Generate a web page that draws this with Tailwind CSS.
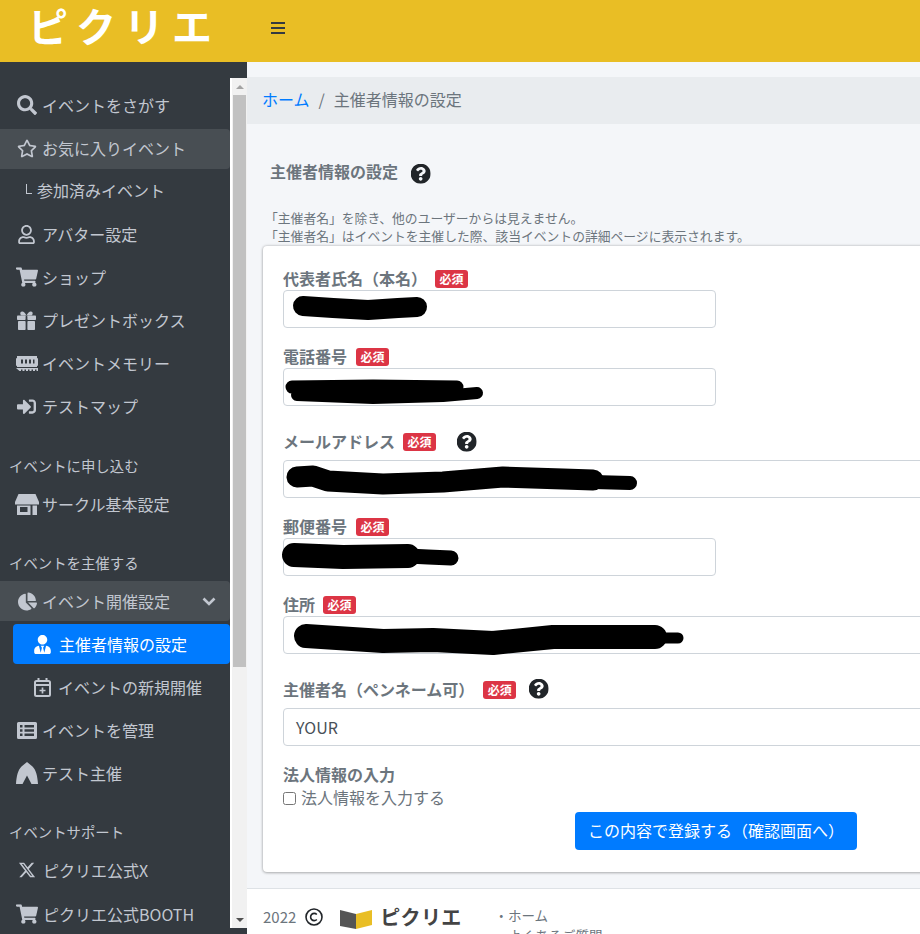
<!DOCTYPE html>
<html lang="ja">
<head>
    <meta charset="UTF-8">
    <meta name="viewport" content="width=device-width, initial-scale=1.0">
    <title>ピクリエ - 主催者情報の設定</title>
    <script src="https://cdn.jsdelivr.net/npm/@tailwindcss/browser@4"></script>
</head>
<body class="w-[920px] h-[934px] overflow-hidden bg-[#343a40] font-['Noto_Sans_CJK_JP','Noto_Sans',sans-serif] text-[16px]">
    <svg class="hidden">
        <symbol id="i-help" viewBox="8 8 496 496"><path d="M504 256c0 136.997-111.043 248-248 248S8 392.997 8 256C8 119.083 119.043 8 256 8s248 111.083 248 248zM262.655 90c-54.497 0-89.255 22.957-116.549 63.758-3.536 5.286-2.353 12.415 2.715 16.258l34.699 26.31c5.205 3.947 12.621 3.008 16.665-2.122 17.864-22.658 30.113-35.797 57.303-35.797 20.429 0 45.698 13.148 45.698 32.958 0 14.976-12.363 22.667-32.534 33.976C247.128 238.528 216 254.941 216 296v4c0 6.627 5.373 12 12 12h56c6.627 0 12-5.373 12-12v-1.333c0-28.462 83.186-29.647 83.186-106.667 0-58.002-60.165-102-116.531-102zM256 338c-25.365 0-46 20.635-46 46 0 25.364 20.635 46 46 46s46-20.636 46-46c0-25.365-20.635-46-46-46z"/></symbol>
        <symbol id="i-cart" viewBox="0 0 576 512"><path d="M528.12 301.319l47.273-208C578.806 78.301 567.391 64 551.99 64H159.208l-9.166-44.81C147.758 8.021 137.93 0 126.529 0H24C10.745 0 0 10.745 0 24v16c0 13.255 10.745 24 24 24h69.883l70.248 343.435C147.325 417.1 136 435.222 136 456c0 30.928 25.072 56 56 56s56-25.072 56-56c0-15.674-6.447-29.835-16.824-40h209.647C430.447 426.165 424 440.326 424 456c0 30.928 25.072 56 56 56s56-25.072 56-56c0-22.172-12.888-41.332-31.579-50.405l5.517-24.276c3.413-15.018-8.002-29.319-23.403-29.319H218.117l-6.545-32h293.145c11.206 0 20.92-7.754 23.403-18.681z"/></symbol>
    </svg>

    <header class="h-[62px] bg-[#e9be25] flex items-center">
        <div class="w-[230px] pl-[28px] text-white font-bold text-[40px] leading-[44px] tracking-[8px] -mt-[12px] whitespace-nowrap overflow-visible">ピクリエ</div>
        <svg class="w-[14px] h-[14px] ml-[41px] -mt-[6px]" viewBox="0 0 14 14" fill="#343a40"><rect y="1" width="14" height="2"/><rect y="6" width="14" height="2"/><rect y="11" width="14" height="2"/></svg>
    </header>

    <div class="flex h-[872px]">
        <!-- sidebar -->
        <aside class="w-[230px] shrink-0 pt-[23px] text-[#c2c7d0] overflow-hidden">
            <a class="flex items-center h-10 mb-[4px] pl-[17px]"><span class="w-[25px] flex"><svg class="w-[20px] h-[20px]" viewBox="0 0 512 512" fill="currentColor"><path d="M505 442.7L405.3 343c-4.5-4.5-10.6-7-17-7H372c27.6-35.3 44-79.7 44-128C416 93.1 322.9 0 208 0S0 93.1 0 208s93.1 208 208 208c48.3 0 92.7-16.4 128-44v16.3c0 6.4 2.5 12.5 7 17l99.7 99.7c9.4 9.4 24.6 9.4 33.9 0l28.3-28.3c9.4-9.4 9.4-24.6.1-34zM208 336c-70.7 0-128-57.2-128-128 0-70.7 57.2-128 128-128 70.7 0 128 57.2 128 128 0 70.7-57.2 128-128 128z"/></svg></span>イベントをさがす</a>
            <a class="flex items-center h-10 mb-[2px] pl-[17px] pb-[2px] bg-white/10 rounded-r"><span class="w-[25px] flex"><svg class="w-[20px] h-[19px]" viewBox="0 0 576 512" fill="currentColor"><path d="M528.1 171.5L382 150.2 316.7 17.8c-11.7-23.6-45.6-23.9-57.4 0L194 150.2 47.9 171.5c-26.2 3.8-36.7 36.1-17.7 54.6l105.7 103-25 145.5c-4.5 26.3 23.2 46 46.4 33.7L288 439.6l130.7 68.7c23.2 12.2 50.9-7.4 46.4-33.7l-25-145.5 105.7-103c19-18.5 8.5-50.8-17.7-54.6zM388.6 312.3l23.7 138.4L288 385.4l-124.3 65.3 23.7-138.4-100.6-98 139-20.2 62.2-126 62.2 126 139 20.2-100.6 98z"/></svg></span>お気に入りイベント</a>
            <a class="flex items-center h-10 mb-[3px] pl-[26px] pb-[2px]"><span class="w-[11px] flex"><span class="w-[6px] h-[10px] -mt-[2px] border-l-[1.5px] border-b-[1.5px] border-[#c2c7d0]"></span></span>参加済みイベント</a>
            <a class="flex items-center h-10 mb-[3px] pl-[18px]"><span class="w-[24px] flex"><svg class="w-[17px] h-[19px]" viewBox="0 0 448 512" fill="currentColor"><path d="M313.6 304c-28.7 0-42.5 16-89.6 16-47.1 0-60.8-16-89.6-16C60.2 304 0 364.2 0 438.4V464c0 26.5 21.5 48 48 48h352c26.5 0 48-21.5 48-48v-25.6c0-74.2-60.2-134.4-134.4-134.4zM400 464H48v-25.6c0-47.6 38.8-86.4 86.4-86.4 14.6 0 38.3 16 89.6 16 51.7 0 74.9-16 89.6-16 47.6 0 86.4 38.8 86.4 86.4V464zM224 288c79.5 0 144-64.5 144-144S303.5 0 224 0 80 64.5 80 144s64.5 144 144 144zm0-240c52.9 0 96 43.1 96 96s-43.1 96-96 96-96-43.1-96-96 43.1-96 96-96z"/></svg></span>アバター設定</a>
            <a class="flex items-center h-10 mb-[3px] pl-[16px]"><span class="w-[26px] flex"><svg class="w-[22px] h-[20px]" viewBox="0 0 576 512" fill="currentColor"><use href="#i-cart"/></svg></span>ショップ</a>
            <a class="flex items-center h-10 mb-[3px] pl-[17px]"><span class="w-[25px] flex"><svg class="w-[19px] h-[19px]" viewBox="0 0 19 19" fill="currentColor"><rect y="4.5" width="8.6" height="4.5" rx=".8"/><rect x="10.4" y="4.5" width="8.6" height="4.5" rx=".8"/><rect x="1" y="10" width="7.6" height="9" rx=".8"/><rect x="10.4" y="10" width="7.6" height="9" rx=".8"/><path d="M9.5 4.500C8 1.500 6.500.3 5 .5 3 .8 2.700 3.400 4.500 4.500h5zm0 0c1.500-3 3-4.200 4.500-4 2 .3 2.300 2.900.5 4h-5z"/></svg></span>プレゼントボックス</a>
            <a class="flex items-center h-10 mb-[3px] pl-[16px]"><span class="w-[26px] flex"><svg class="w-[22px] h-[15px]" viewBox="0 0 22 15" fill="currentColor"><path d="M1 0h20v2l1 .5v7l-1 .5v1h-20v-1l-1-.5v-7l1-.5zM0 12h22v3h-1.500v-1.500h-1.500v1.500h-2v-1.500h-1.500v1.500h-2v-1.500h-1.500v1.500h-2v-1.500h-1.500v1.500h-2v-1.500h-1.500v1.500h-1.500z"/><path fill="#343a40" d="M5 3.500h2v4h-2zM9 3.500h2v4h-2zM13 3.500h2v4h-2zM17 3.500h1.500v4h-1.500z"/></svg></span>イベントメモリー</a>
            <a class="flex items-center h-10 mb-[3px] pl-[17px]"><span class="w-[25px] flex"><svg class="w-[19px] h-[19px]" viewBox="0 0 512 512" fill="currentColor"><path d="M416 448h-84c-6.600 0-12-5.400-12-12v-40c0-6.600 5.400-12 12-12h84c17.700 0 32-14.300 32-32V160c0-17.700-14.300-32-32-32h-84c-6.600 0-12-5.400-12-12V76c0-6.600 5.400-12 12-12h84c53 0 96 43 96 96v192c0 53-43 96-96 96zm-47-201L201 79c-15-15-41-4.500-41 17v96H24c-13.300 0-24 10.700-24 24v96c0 13.300 10.700 24 24 24h136v96c0 21.500 26 32 41 17l168-168c9.300-9.400 9.300-24.600 0-34z"/></svg></span>テストマップ</a>

            <p class="h-[55px] flex items-end pb-[8px] pl-[9px] text-[14.400px] leading-[20px]">イベントに申し込む</p>
            <a class="flex items-center h-10 mb-[3px] pl-[15px]"><span class="w-[27px] flex"><svg class="w-[24px] h-[21px]" viewBox="0 0 24 21" fill="currentColor"><path d="M3.500 0h17l3.500 8v2.500h-24V8z"/><path fill-rule="evenodd" d="M2 11.500h13.500V21H2zM5 13v5h7.500v-5z"/><path d="M17.500 11.500h4.500V21h-4.500z"/></svg></span>サークル基本設定</a>

            <p class="h-[54px] flex items-end pb-[8px] pl-[9px] text-[14.400px] leading-[20px]">イベントを主催する</p>
            <a class="flex items-center h-10 mb-[3px] pl-[18px] bg-white/10 rounded-r"><span class="w-[24px] flex"><svg class="w-[19px] h-[19px]" viewBox="0 0 544 512" fill="currentColor"><path d="M527.790 288H290.500l158.030 158.030c6.040 6.040 15.980 6.530 22.190.68 38.700-36.460 65.320-85.610 73.130-140.860 1.340-9.460-6.510-17.850-16.060-17.850zm-15.830-64.800C503.720 103.740 408.260 8.280 288.800.04 279.680-.59 272 7.100 272 16.240V240h223.770c9.140 0 16.820-7.680 16.190-16.800zM224 288V50.710c0-9.550-8.390-17.400-17.840-16.060C86.990 51.490-4.100 155.600.14 280.370 4.500 408.510 114.830 513.590 243.030 511.980c50.400-.63 96.970-16.870 135.260-44.030 7.900-5.600 8.420-17.230 1.570-24.080L224 288z"/></svg></span>イベント開催設定<svg class="w-[14px] h-[9px] ml-[32px]" viewBox="0 0 14 9" fill="none" stroke="currentColor" stroke-width="2.600"><path d="M1.500 1.500 7 7l5.500-5.500"/></svg></a>
            <a class="flex items-center h-10 mb-[3px] ml-[13px] pl-[21px] bg-[#007bff] text-white rounded"><span class="w-[25px] flex"><svg class="w-[17px] h-[19px]" viewBox="0 0 448 512" fill="currentColor"><path d="M224 256c70.700 0 128-57.300 128-128S294.700 0 224 0 96 57.300 96 128s57.300 128 128 128zm95.800 32.600L272 480l-32-136 32-56h-96l32 56-32 136-47.800-191.400C56.900 292 0 350.300 0 422.400V464c0 26.500 21.500 48 48 48h352c26.500 0 48-21.500 48-48v-41.600c0-72.100-56.900-130.400-128.200-133.800z"/></svg></span>主催者情報の設定</a>
            <a class="flex items-center h-10 mb-[3px] pl-[34px]"><span class="w-[24px] flex"><svg class="w-[17px] h-[19px]" viewBox="0 0 17 19" fill="none" stroke="currentColor" stroke-width="2"><rect x="1" y="3" width="15" height="15" rx="1.500"/><path d="M1 7h15M4.500 0v4M12.500 0v4"/><path d="M8.500 9.500v6M5.500 12.500h6" stroke-width="1.700"/></svg></span>イベントの新規開催</a>
            <a class="flex items-center h-10 mb-[3px] pl-[17px]"><span class="w-[25px] flex"><svg class="w-[20px] h-[17px]" viewBox="0 0 20 17" fill="currentColor"><path fill-rule="evenodd" d="M1.500 0h17A1.500 1.500 0 0 1 20 1.500v14a1.500 1.500 0 0 1-1.500 1.500h-17A1.500 1.500 0 0 1 0 15.500v-14A1.500 1.500 0 0 1 1.500 0zM3 3v2.500h2.500V3zm4.500 0v2.500h9.500V3zM3 7.300v2.500h2.500V7.300zm4.500 0v2.500h9.500V7.300zM3 11.600v2.500h2.500v-2.500zm4.500 0v2.500h9.500v-2.500z"/></svg></span>イベントを管理</a>
            <a class="flex items-center h-10 mb-[3px] pl-[16px]"><span class="w-[26px] flex"><svg class="w-[22px] h-[22px]" viewBox="0 0 22 22" fill="currentColor"><path d="M11 0l5.500 4.500C20 8 21.500 14 22 22h-6.500L11 13.500 6.500 22H0C.5 14 2 8 5.500 4.500z"/></svg></span>テスト主催</a>

            <p class="h-[54px] flex items-end pb-[8px] pl-[9px] text-[14.400px] leading-[20px]">イベントサポート</p>
            <a class="flex items-center h-10 mb-[4px] pl-[18px]"><span class="w-[25px] flex"><svg class="w-[18px] h-[18px]" viewBox="0 0 512 512" fill="currentColor"><path d="M389.200 48h70.600L305.600 224.200 487 464H345L233.700 318.600 106.500 464H35.800L200.700 275.500 26.800 48H172.400L272.900 180.900 389.200 48zM364.400 421.800h39.100L151.100 88h-42L364.400 421.800z"/></svg></span>ピクリエ公式X</a>
            <a class="flex items-center h-10 mb-[3px] pl-[16px]"><span class="w-[27px] flex"><svg class="w-[22px] h-[20px]" viewBox="0 0 576 512" fill="currentColor"><use href="#i-cart"/></svg></span>ピクリエ公式BOOTH</a>
        </aside>

        <!-- sidebar scrollbar -->
        <div class="w-[17px] shrink-0 pt-[16px] pb-[6px]">
            <div class="h-full bg-[#f1f1f1] border-l-2 border-white flex flex-col items-center">
                <div class="h-[17px] flex items-center"><div class="w-0 h-0 border-x-[4px] border-x-transparent border-b-[4px] border-b-[#a3a3a3]"></div></div>
                <div class="w-[13px] h-[572px] bg-[#c1c1c1]"></div>
                <div class="flex-1"></div>
                <div class="h-[17px] flex items-center"><div class="w-0 h-0 border-x-[4px] border-x-transparent border-t-[4px] border-t-[#505050]"></div></div>
            </div>
        </div>

        <!-- main -->
        <main class="flex-1 min-w-0 bg-[#f4f6f9] pt-[15px] text-[#6c757d] overflow-hidden">
            <nav class="h-[47px] bg-[#e9ecef] flex items-center pl-[15px] pb-[4px] whitespace-nowrap">
                <a class="text-[#007bff]">ホーム</a><span class="mx-[9px]">/</span><span>主催者情報の設定</span>
            </nav>

            <div class="mt-[38px] ml-[23px] h-[22px] flex items-center">
                <h1 class="font-bold -mt-[4px]">主催者情報の設定</h1>
                <svg class="w-[20px] h-[20px] ml-[13px] mt-[1px] text-[#212529]" viewBox="8 8 496 496" fill="currentColor"><use href="#i-help"/></svg>
            </div>
            <p class="mt-[25px] ml-[18px] mb-px text-[12.800px] leading-[18px] whitespace-nowrap">「主催者名」を除き、他のユーザーからは見えません。<br>「主催者名」はイベントを主催した際、該当イベントの詳細ページに表示されます。</p>

            <form class="ml-[16px] w-[800px] bg-white rounded-[4px] shadow-[0_0_3px_rgba(0,0,0,.25),0_1px_3px_rgba(0,0,0,.2)] pt-[22px] pl-[20px] pb-[22px]">
                <div class="h-[22px] pb-[3px] flex items-center font-bold">代表者氏名（本名）<span class="ml-[8px] mt-[3px] w-[33px] h-[18px] bg-[#dc3545] rounded-[3px] text-white text-[12px] leading-[18px] text-center">必須</span></div>
                <div class="relative w-[433px] h-[38px] border border-[#ced4da] rounded-[4px] bg-white">
                    <svg class="absolute -left-px -top-px overflow-visible" width="433" height="38" fill="none" stroke="#000" stroke-linecap="round" stroke-linejoin="round"><path d="M20 16 50 18 85 20 115 18 134 17" stroke-width="20"/></svg>
                </div>

                <div class="mt-[18px] h-[22px] pb-[2px] flex items-center font-bold">電話番号<span class="ml-[9px] mt-[2px] w-[33px] h-[18px] bg-[#dc3545] rounded-[3px] text-white text-[12px] leading-[18px] text-center">必須</span></div>
                <div class="relative w-[433px] h-[38px] border border-[#ced4da] rounded-[4px] bg-white">
                    <svg class="absolute -left-px -top-px overflow-visible" width="433" height="38" fill="none" stroke="#000" stroke-linecap="round" stroke-linejoin="round"><path d="M9 19 90 18 174 19" stroke-width="13"/><path d="M14 27 90 30 160 28 194 25" stroke-width="12"/></svg>
                </div>

                <div class="mt-[18px] h-[36px] pb-[3px] flex items-center font-bold">メールアドレス<span class="ml-[8px] mt-[3px] w-[33px] h-[18px] bg-[#dc3545] rounded-[3px] text-white text-[12px] leading-[18px] text-center">必須</span><svg class="w-[20px] h-[20px] ml-[21px] mt-[2px] text-[#212529]" viewBox="8 8 496 496" fill="currentColor"><use href="#i-help"/></svg></div>
                <div class="relative w-[760px] h-[38px] border border-[#ced4da] rounded-[4px] bg-white">
                    <svg class="absolute -left-px -top-px overflow-visible" width="433" height="38" fill="none" stroke="#000" stroke-linecap="round" stroke-linejoin="round"><path d="M14 17 30 16 45 21 100 24 160 22 220 17 280 19 310 20" stroke-width="21"/><path d="M310 22 347 23" stroke-width="14"/></svg>
                </div>

                <div class="mt-[18px] h-[22px] pb-[2px] flex items-center font-bold">郵便番号<span class="ml-[9px] mt-[2px] w-[33px] h-[18px] bg-[#dc3545] rounded-[3px] text-white text-[12px] leading-[18px] text-center">必須</span></div>
                <div class="relative w-[433px] h-[38px] border border-[#ced4da] rounded-[4px] bg-white">
                    <svg class="absolute -left-px -top-px overflow-visible" width="433" height="38" fill="none" stroke="#000" stroke-linecap="round" stroke-linejoin="round"><path d="M11 17 60 19 125 18" stroke-width="24"/><path d="M125 18 145 19 168 20" stroke-width="15"/></svg>
                </div>

                <div class="mt-[18px] h-[22px] pb-[2px] flex items-center font-bold">住所<span class="ml-[8px] mt-[2px] w-[33px] h-[18px] bg-[#dc3545] rounded-[3px] text-white text-[12px] leading-[18px] text-center">必須</span></div>
                <div class="relative w-[760px] h-[38px] border border-[#ced4da] rounded-[4px] bg-white">
                    <svg class="absolute -left-px -top-px overflow-visible" width="433" height="38" fill="none" stroke="#000" stroke-linecap="round" stroke-linejoin="round"><path d="M23 20 100 25 150 24 210 27 270 21 345 21 372 21" stroke-width="24"/><path d="M372 22 395 22" stroke-width="11"/></svg>
                </div>

                <div class="mt-[18px] h-[36px] pb-[2px] flex items-center font-bold">主催者名（ペンネーム可）<span class="ml-[9px] mt-[2px] w-[33px] h-[18px] bg-[#dc3545] rounded-[3px] text-white text-[12px] leading-[18px] text-center">必須</span><svg class="w-[20px] h-[20px] ml-[13px] text-[#212529]" viewBox="8 8 496 496" fill="currentColor"><use href="#i-help"/></svg></div>
                <div class="w-[760px] h-[38px] border border-[#ced4da] rounded-[4px] bg-white flex items-center pl-[12px] text-[#495057]">YOUR</div>

                <div class="mt-[18px] h-[22px] pb-[3px] flex items-center font-bold">法人情報の入力</div>
                <label class="h-[24px] pb-[2px] flex items-center"><span class="w-[13px] h-[13px] mt-[2px] border border-[#767676] rounded-[2.500px] bg-white mr-[5px]"></span>法人情報を入力する</label>
                <button type="button" class="block mt-[2px] ml-[292px] w-[282px] h-[38px] pb-[2px] bg-[#007bff] text-white rounded-[4px]">この内容で登録する（確認画面へ）</button>
            </form>

            <footer class="mt-[16px] h-[60px] bg-white border-t border-[#dee2e6] pl-[16px] pt-[15px] flex items-start whitespace-nowrap overflow-hidden">
                <span class="leading-[26px] text-[15px]">2022</span>
                <svg class="w-[18px] h-[18px] ml-[9px] mt-[4px]" viewBox="0 0 18 18" fill="none" stroke="#212529" stroke-width="1.600"><circle cx="9" cy="9" r="8"/><path d="M11.800 6.500A3.600 3.600 0 1 0 11.800 11.500"/></svg>
                <svg class="w-[32px] h-[20px] ml-[17px] mt-[5px]" viewBox="0 0 32 20"><path d="M0 1 16 5v15L0 17z" fill="#555"/><path d="M16 5 32 1v15l-16 4z" fill="#e9be25"/></svg>
                <span class="ml-[8px] text-[20px] leading-[26px] font-bold text-[#444] tracking-[0.300px]">ピクリエ</span>
                <ul class="ml-[33px] text-[13.500px] leading-[20px] mt-px">
                    <li>・ホーム</li>
                    <li>・よくあるご質問</li>
                </ul>
            </footer>
        </main>
    </div>
</body>
</html>
